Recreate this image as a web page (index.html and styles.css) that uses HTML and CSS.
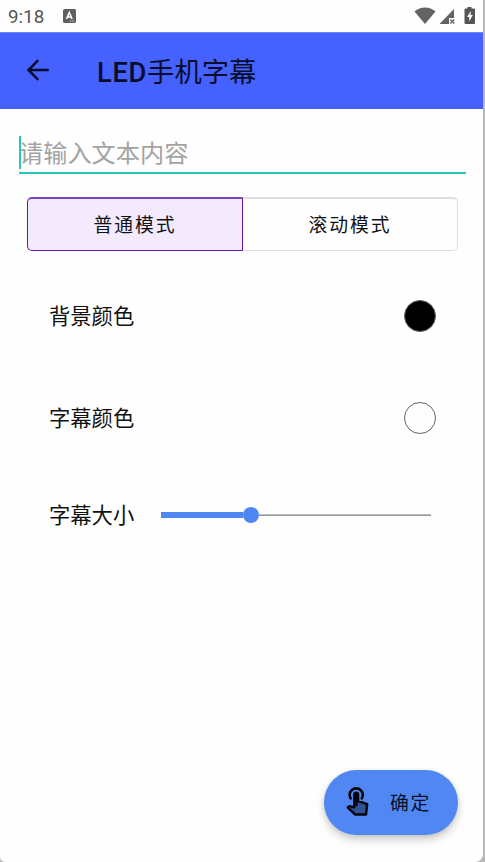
FILE: index.html
```html
<!DOCTYPE html>
<html lang="zh-CN">
<head>
<meta charset="utf-8">
<title>LED手机字幕</title>
<link rel="stylesheet" href="styles.css">
</head>
<body>
<div class="screen">
  <header class="status">
    <span class="clock">9:18</span>
    <svg class="keyboard" width="13" height="14" viewBox="0 0 13 14"><rect width="13" height="14" rx="1.5" fill="#606060"/><path d="M3.5 10 6.3 3.5 9.1 10M4.6 8H8" fill="none" stroke="#fff" stroke-width="1.5"/><path d="M7 12h5" stroke="#ddd" stroke-width="1" stroke-dasharray="1 .7"/></svg>
    <svg class="signals" width="64" height="20" viewBox="0 0 64 20">
      <path d="M.5 5.5C6.5.3 15.500.3 21.500 5.500L11 18Z" fill="#636363"/>
      <path d="M25.500 18 40 3v9h-5v6Z" fill="#636363"/>
      <path d="m36.300 13.500 4 4m0-4-4 4" stroke="#636363" stroke-width="1.300"/>
      <path d="M53.500 1h4v1.500H60q1 0 1 1V17q0 1-1 1h-8.500q-1 0-1-1V3.500q0-1 1-1h2Z" fill="#555"/>
      <path d="M56.800 5 53 11h2.200v4.500L58.800 9h-2.200Z" fill="#fff"/>
    </svg>
  </header>
  <div class="appbar">
    <svg class="back" width="24" height="24" viewBox="0 0 24 24"><path d="M12.200 2.200 2.500 12l9.700 9.800M2.500 12H22.800" fill="none" stroke="#080d2c" stroke-width="2.500"/></svg>
    <h1><span class="latin">LED</span>手机字幕</h1>
  </div>
  <main>
    <div class="field"><span class="caret"></span><span class="hint">请输入文本内容</span></div>
    <div class="modes">
      <button class="mode selected">普通模式</button>
      <button class="mode">滚动模式</button>
    </div>
    <div class="row"><span class="label">背景颜色</span><i class="swatch black"></i></div>
    <div class="row"><span class="label">字幕颜色</span><i class="swatch"></i></div>
    <div class="row size"><span class="label">字幕大小</span>
      <div class="slider"><div class="filled"></div><div class="thumb"></div><div class="rest"></div></div>
    </div>
  </main>
  <button class="confirm">
    <svg width="24" height="30" viewBox="0 0 24 30">
      <path d="M8.300 17.500V7.500q0-1.900 1.900-1.900t1.900 1.900V14l9.100 3.200-1.200 10.300H9.200L1.800 20.600l1.500-1.400 5 1.200Z" fill="#315396" stroke="#05070c" stroke-width="2.400" stroke-linejoin="round"/>
      <path d="M5.200 12.300a6.600 6.600 0 1 1 10 0" fill="none" stroke="#05070c" stroke-width="2.600"/>
      <path d="M10.200 7v12" stroke="#05070c" stroke-width="3"/>
    </svg>
    <span>确定</span>
  </button>
</div>
</body>
</html>
```

FILE: styles.css
```css
* { box-sizing: border-box; }
body {
  margin: 0;
  height: 862px;
  overflow: hidden;
  background: #b9b9b9;
  font-family: "Noto Sans CJK SC", sans-serif;
  color: #111;
}
.screen {
  position: relative;
  width: 483px;
  height: 862px;
  background: #fefefe;
  border-radius: 0 0 8px 5px;
  display: flex;
  flex-direction: column;
}
.status {
  height: 32px;
  flex: none;
  display: flex;
  align-items: center;
  padding: 0 5px 0 8px;
}
.clock {
  font: 400 18.800px/32px Roboto, sans-serif;
  color: #555;
  width: 55px;
  padding-top: 2px;
}
.signals { margin-left: auto; margin-top: -1px; }
.appbar {
  height: 77px;
  flex: none;
  display: flex;
  align-items: center;
  background: #4561ff;
  border-top: 1px solid #6f84ff;
  padding-left: 26px;
}
.back { margin-right: 47px; margin-top: -2px; }
h1 {
  margin: 0;
  font: 400 27.300px/40px "Noto Sans CJK SC", sans-serif;
  color: #080d2c;
}
.latin { font-family: Roboto, sans-serif; font-weight: 500; letter-spacing: .7px; }
.field {
  position: relative;
  margin: 26px 17px 0 19px;
  height: 39px;
  border-bottom: 2px solid #26c9b7;
}
.caret {
  position: absolute;
  left: 0;
  top: 1px;
  width: 2px;
  height: 33px;
  background: #26c9b7;
}
.hint {
  display: block;
  font-size: 24.200px;
  line-height: 34px;
  color: #a3a3a3;
}
.modes { display: flex; margin: 23px 25px 0 27px; height: 54px; }
.mode {
  flex: 1;
  border: 1px solid #dedede;
  border-top-width: 2px;
  border-left: 0;
  border-radius: 0 5px 5px 0;
  background: #fefefe;
  font: 400 18.800px/30px "Noto Sans CJK SC", sans-serif;
  letter-spacing: 2px;
  color: #111;
  padding: 0 0 2px;
}
.mode.selected {
  border: 1px solid #6018a8;
  border-top: 2px solid #7945bd;
  border-radius: 5px 0 0 5px;
  background: #f3eafe;
}
.row {
  display: flex;
  align-items: center;
  height: 32px;
  margin: 49px 47px 0 49px;
  font-size: 21.300px;
}
.row + .row { margin-top: 70px; }
.label { padding-bottom: 4px; }
.swatch {
  margin-left: auto;
  width: 32px;
  height: 32px;
  border: 1px solid #666;
  border-radius: 50%;
}
.black { background: #000; }
.row + .row.size { margin-top: 65px; }
.slider { display: flex; align-items: center; width: 270px; margin-left: 27px; }
.filled { width: 82px; height: 6px; background: #4f87f2; }
.thumb { width: 16px; height: 16px; border-radius: 50%; background: #4f87f2; }
.rest { flex: 1; height: 2px; background: #999; border-top: 1px solid #bbb; }
.confirm {
  position: absolute;
  left: 324px;
  top: 770px;
  width: 134px;
  height: 65px;
  border: 0;
  border-radius: 33px;
  padding: 0 0 2px 22px;
  display: flex;
  align-items: center;
  gap: 20px;
  background: #5087f2;
  box-shadow: 0 5px 9px rgba(0,0,0,.18), 0 1px 4px rgba(0,0,0,.1);
  font: 400 18.800px/30px "Noto Sans CJK SC", sans-serif;
  letter-spacing: 1.800px;
  color: #08101f;
}
```
